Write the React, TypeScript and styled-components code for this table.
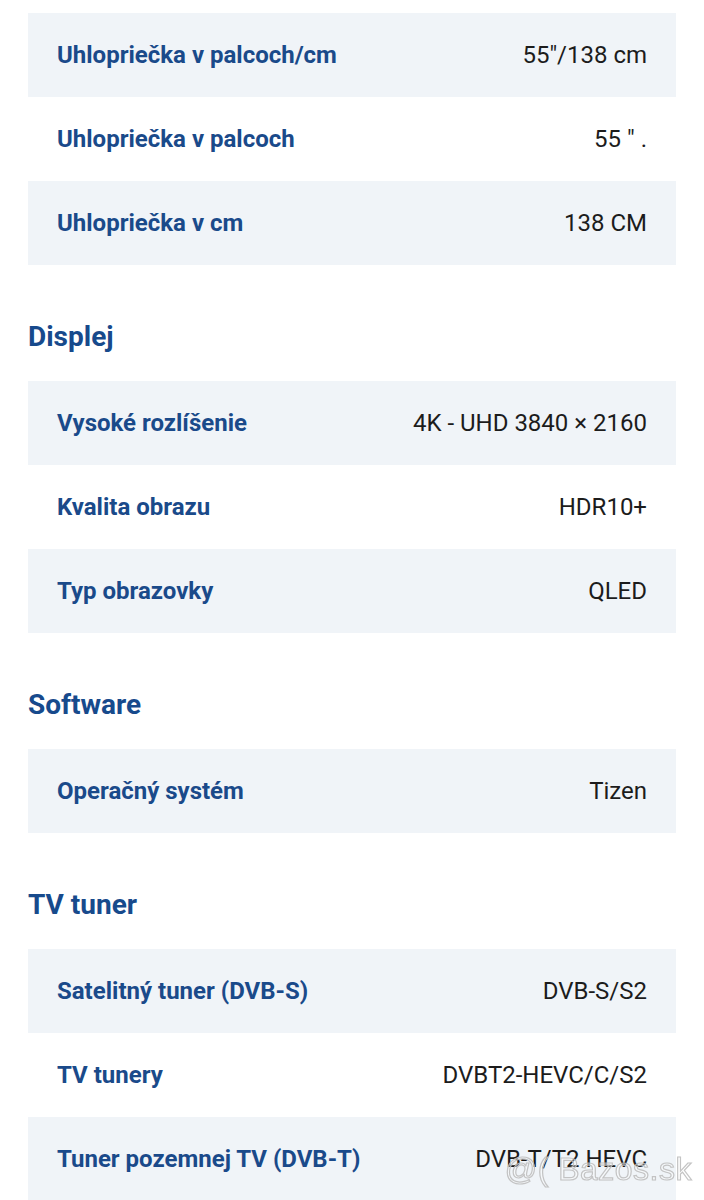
import styled, { createGlobalStyle } from 'styled-components';

type Spec = { label: string; value: string };
type Section = { title?: string; rows: Spec[] };

const sections: Section[] = [
  {
    rows: [
      { label: 'Uhlopriečka v palcoch/cm', value: '55"/138 cm' },
      { label: 'Uhlopriečka v palcoch', value: '55 " .' },
      { label: 'Uhlopriečka v cm', value: '138 CM' },
    ],
  },
  {
    title: 'Displej',
    rows: [
      { label: 'Vysoké rozlíšenie', value: '4K - UHD 3840 × 2160' },
      { label: 'Kvalita obrazu', value: 'HDR10+' },
      { label: 'Typ obrazovky', value: 'QLED' },
    ],
  },
  {
    title: 'Software',
    rows: [{ label: 'Operačný systém', value: 'Tizen' }],
  },
  {
    title: 'TV tuner',
    rows: [
      { label: 'Satelitný tuner (DVB-S)', value: 'DVB-S/S2' },
      { label: 'TV tunery', value: 'DVBT2-HEVC/C/S2' },
      { label: 'Tuner pozemnej TV (DVB-T)', value: 'DVB-T/T2 HEVC' },
    ],
  },
];

const App = () => {
  return (
    <>
      <GlobalStyle />
      <Page>
        {sections.map((section, i) => (
          <Block key={i}>
            {section.title && <Heading>{section.title}</Heading>}
            <Table>
              {section.rows.map((row, j) => (
                <Row key={row.label} $shaded={j % 2 === 0}>
                  <Label>{row.label}</Label>
                  <Value>{row.value}</Value>
                </Row>
              ))}
            </Table>
          </Block>
        ))}
      </Page>
      <Watermark>@( Bazos.sk</Watermark>
    </>
  );
};

export default App;

const GlobalStyle = createGlobalStyle`
  html, body {
    margin: 0;
    padding: 0;
    background: #ffffff;
    overflow: hidden;
  }
  body {
    font-family: Roboto, "Noto Sans", "Liberation Sans", sans-serif;
  }
`;

// whole page column
const Page = styled.div`
  display: flex;
  flex-direction: column;
  padding: 13px 28px 0;
  height: 1200px;
  box-sizing: border-box;
`;

const Block = styled.section`
  display: flex;
  flex-direction: column;
`;

const Heading = styled.h2`
  margin: 56px 0 28px;
  font-size: 28px;
  line-height: 32px;
  font-weight: 700;
  color: #174a8c;
`;

const Table = styled.div`
  display: flex;
  flex-direction: column;
`;

const Row = styled.div<{ $shaded: boolean }>`
  display: flex;
  align-items: center;
  justify-content: space-between;
  height: 84px;
  padding: 0 29px;
  box-sizing: border-box;
  background: ${({ $shaded }) => ($shaded ? '#f0f4f8' : '#ffffff')};
`;

const Label = styled.span`
  font-size: 24px;
  font-weight: 700;
  color: #1a4a8a;
`;

const Value = styled.span`
  font-size: 24px;
  font-weight: 400;
  color: #1c1c1c;
`;

// bazos watermark over the last row
const Watermark = styled.div`
  position: fixed;
  right: 12px;
  bottom: 12px;
  font-family: "Liberation Sans", Arial, sans-serif;
  font-size: 32px;
  letter-spacing: 0.5px;
  color: rgba(255, 255, 255, 0.35);
  -webkit-text-stroke: 1.2px rgba(190, 190, 190, 0.9);
`;
